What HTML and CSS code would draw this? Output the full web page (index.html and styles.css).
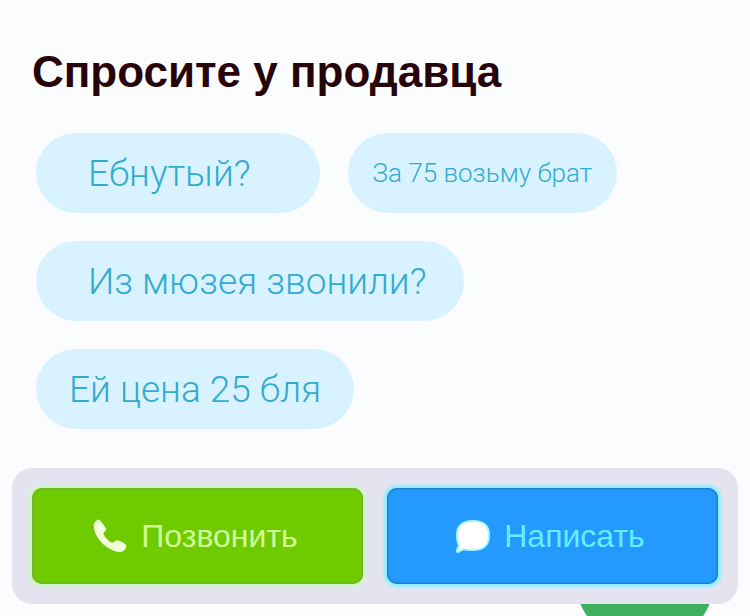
FILE: index.html
```html
<!DOCTYPE html>
<html lang="ru">
<head>
    <meta charset="UTF-8">
    <meta name="viewport" content="width=device-width, initial-scale=1.0">
    <title>Спросите у продавца</title>
    <link rel="stylesheet" href="styles.css">
</head>
<body>
    <main class="ask-seller">
        <h1 class="ask-title">Спросите у продавца</h1>
        <div class="questions">
            <button class="question question-short" type="button">Ебнутый?</button>
            <button class="question question-small" type="button">За 75 возьму брат</button>
            <button class="question question-long" type="button">Из мюзея звонили?</button>
            <button class="question" type="button">Ей цена 25 бля</button>
        </div>
    </main>

    <div class="contact-bar">
        <button class="contact-button call-button" type="button">
            <svg class="contact-icon" viewBox="0 0 36 36" aria-hidden="true">
                <path d="M1 5C2 3 4 1 6 .6C8 1 10 5 14 10C14.500 12 11 14 11 15.500C11.500 18 17 24 20 25C22 25.500 23.500 22 25.500 22.500C28 23 34 25.500 35 27.500C36 30 34 33 31 34.500C25 36 16 32 9.500 25.500C3.500 19 0 11 1 5Z"/>
            </svg>
            <span>Позвонить</span>
        </button>
        <button class="contact-button write-button" type="button">
            <svg class="contact-icon" viewBox="0 0 36 36" aria-hidden="true">
                <path d="M18 2C30 2 35 7 35 17C35 28 30 33 18 33C14 33 11 33 8 32L2 35C1 35 .5 34 1 33L3 28C1.500 25 1 21 1 17C1 7 7 2 18 2Z"/>
            </svg>
            <span>Написать</span>
        </button>
    </div>

    <svg class="float-circle" viewBox="0 0 140 109" aria-hidden="true">
        <circle cx="70" cy="70" r="70"/>
    </svg>
</body>
</html>
```

FILE: styles.css
```css
* {
    margin: 0;
    padding: 0;
    box-sizing: border-box;
}

body {
    min-height: 100vh;
    padding: 48px 12px 12px;
    display: flex;
    flex-direction: column;
    position: relative;
    background: #fbfcfe;
    font-family: "Liberation Sans", Arial, sans-serif;
}

.ask-seller {
    padding: 0 20px 0 24px;
}

.ask-title {
    margin: 0 0 37px -4px;
    font-size: 44px;
    line-height: 48px;
    color: #26040a;
}

.questions {
    display: flex;
    flex-wrap: wrap;
    gap: 28px;
}

.question {
    height: 80px;
    padding: 0 33px;
    border: none;
    border-radius: 40px;
    background: #d9f2ff;
    color: #32abd0;
    font-family: Roboto, "Liberation Sans", sans-serif;
    font-size: 37px;
    font-weight: 300;
    cursor: pointer;
}

.question-short {
    padding: 0 69px 0 52px;
}

.question-long {
    padding: 0 37px 0 52px;
}

.question-small {
    padding: 0 25px;
    font-size: 26px;
}

.contact-bar {
    margin-top: auto;
    padding: 20px;
    display: flex;
    gap: 24px;
    position: relative;
    z-index: 1;
    border-radius: 20px;
    background: #e3e4f0;
}

.contact-button {
    flex: 1;
    height: 96px;
    padding-right: 4px;
    display: flex;
    align-items: center;
    justify-content: center;
    gap: 14px;
    border: none;
    border-radius: 10px;
    font-family: inherit;
    font-size: 32px;
    cursor: pointer;
}

.contact-icon {
    width: 34px;
    height: 34px;
    fill: currentColor;
}

.call-button {
    background: #6fcb00;
    box-shadow: 0 0 3px 3px #d2f5c8, inset 0 0 2px 1px #6fae32;
    color: #d0ff9c;
}

.call-button .contact-icon {
    fill: #f0ffd8;
}

.write-button {
    background: #2499ff;
    box-shadow: 0 0 3px 3px #8eefff, inset 0 0 2px 1px #1878b8;
    color: #62efff;
}

.write-button .contact-icon {
    fill: #fff;
    stroke: #9ff6ff;
    stroke-width: 2;
}

/* круглая кнопка под панелью */
.float-circle {
    width: 140px;
    height: 109px;
    position: absolute;
    right: 35px;
    bottom: 0;
    fill: #3fb05f;
}
```
